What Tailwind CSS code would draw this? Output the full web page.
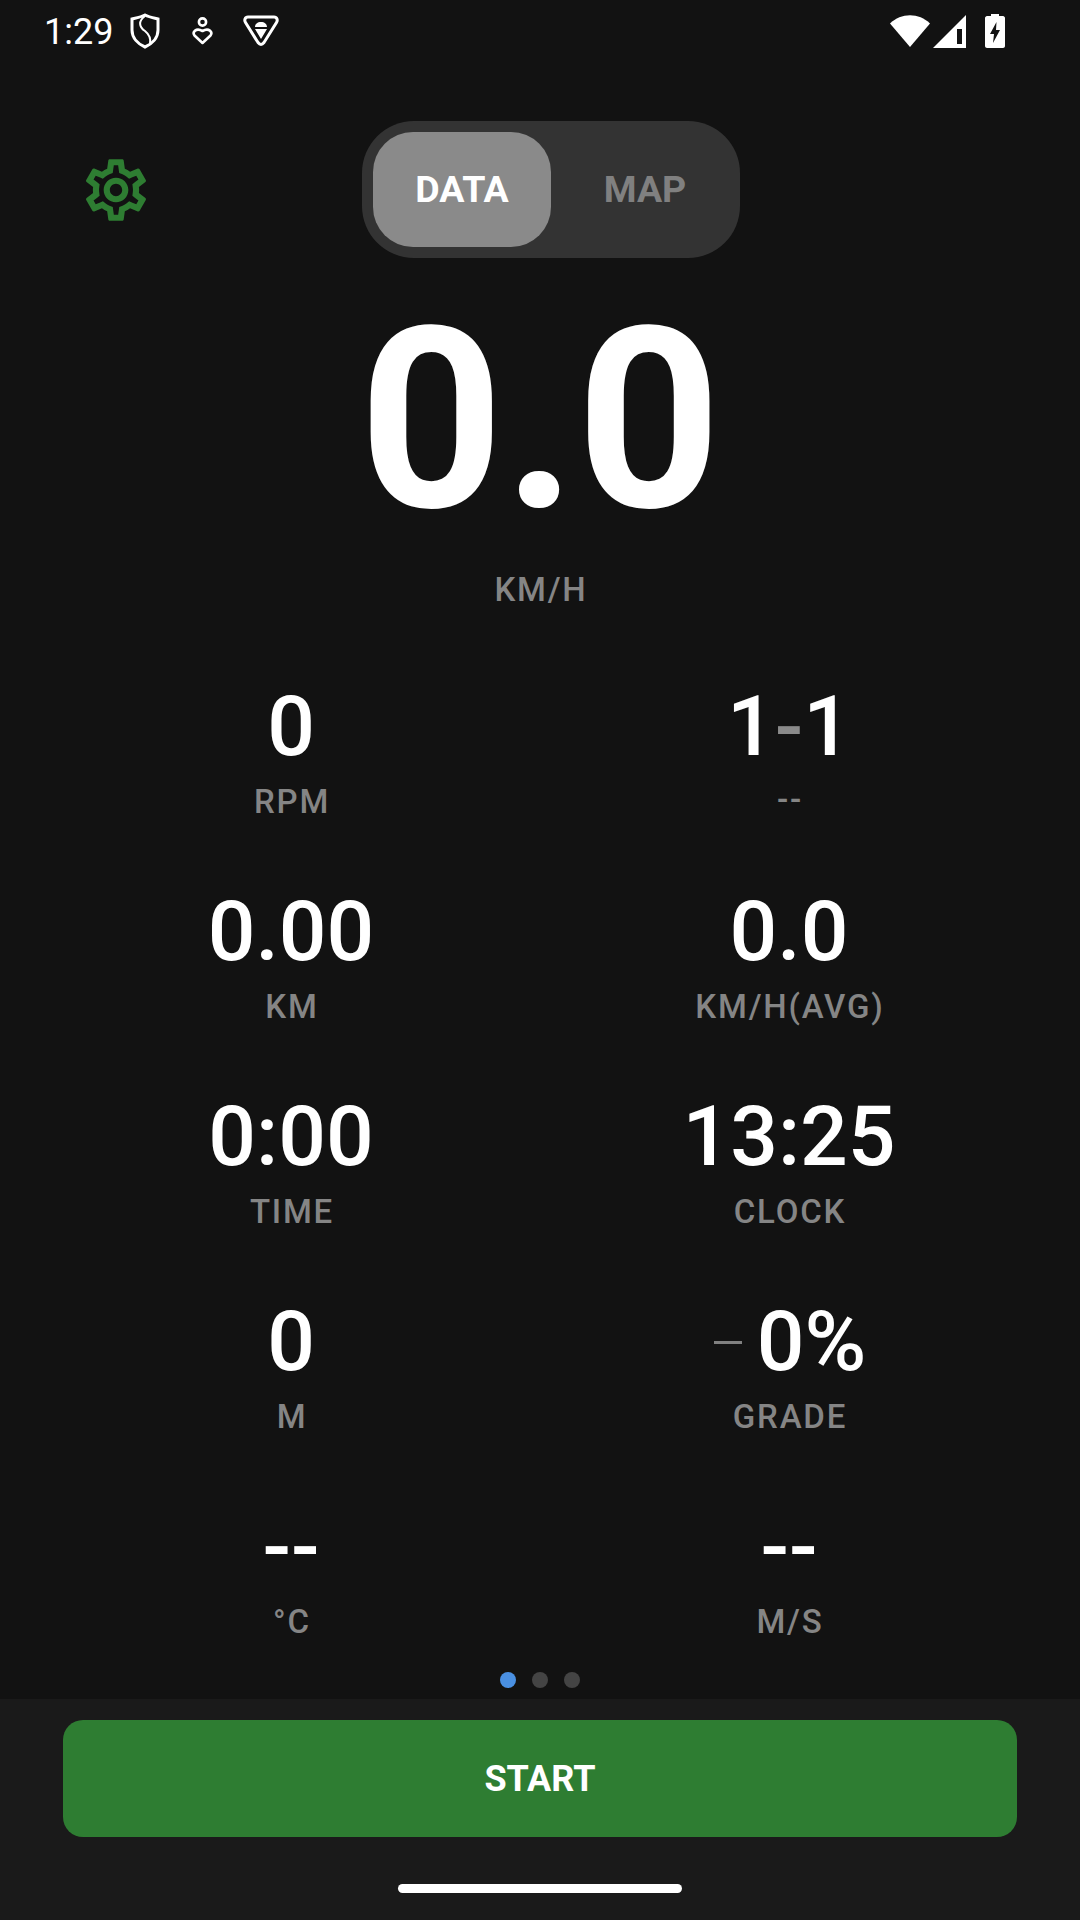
<!DOCTYPE html>
<html lang="en">
<head>
    <meta charset="UTF-8">
    <meta name="viewport" content="width=device-width, initial-scale=1.0">
    <title>Bike computer</title>
    <script src="https://cdn.jsdelivr.net/npm/@tailwindcss/browser@4"></script>
</head>
<body class="bg-[#121212]">
<div class="w-[1080px] h-[1920px] flex flex-col overflow-hidden bg-[#121212] text-white font-['Roboto',sans-serif]">

    <!-- status bar -->
    <div class="h-[60px] pt-[2px] flex items-center pl-[44px] pr-[75px] shrink-0">
        <span class="text-[36px] leading-[58px] pt-[1px]">1:29</span>
        <svg class="ml-[17px]" width="30" height="36" viewBox="0 0 30 36" fill="none" stroke="white" stroke-width="3"><path d="M15 2 C19 4 24 5 28 6 V17 C28 25 22 31 15 34 C8 31 2 25 2 17 V6 C6 5 11 4 15 2 Z"/><path d="M15 3 C8 8 9 14 15 18 C20 22 21 26 20 31" stroke-width="2"/></svg>
        <svg class="ml-[32px]" width="21" height="28" viewBox="0 0 21 28" fill="none" stroke="white" stroke-width="2.600"><circle cx="10.500" cy="5" r="3.600"/><path d="M10.500 26 L2.500 18.500 C0 15 4 10.500 10.500 14 C17 10.500 21 15 18.500 18.500 Z" stroke-linejoin="round"/></svg>
        <svg class="ml-[30px]" width="36" height="32" viewBox="0 0 36 32"><path d="M5 2 H31 C34 2 35 5 33.500 7.500 L21 27.500 C19 30 17 30 15 27.500 L2.500 7.500 C1 5 2 2 5 2 Z" fill="none" stroke="white" stroke-width="3"/><path d="M12 12 C12 9 14.500 7 18 7 C21.500 7 24 9 24 12 Z M12 14 H24 L18 24 Z" fill="white"/></svg>
        <svg class="ml-auto" width="40" height="32" viewBox="0 0 40 32"><path d="M0 8.500 C11 -2.500 29 -2.500 40 8.500 L20 32 Z" fill="white"/></svg>
        <svg class="ml-[3px]" width="33" height="33" viewBox="0 0 33 33"><path d="M33 0 V33 H0 Z M29 14 H24 V29 H29 Z" fill="white" fill-rule="evenodd"/></svg>
        <svg class="ml-[19px]" width="20" height="34" viewBox="0 0 20 34"><path d="M6 0 H14 V2 H18 C19 2 20 3 20 4 V32 C20 33 19 34 18 34 H2 C1 34 0 33 0 32 V4 C0 3 1 2 2 2 H6 Z M11.500 8 L5 20 H9 L8 29 L15 16 H11 Z" fill="white" fill-rule="evenodd"/></svg>
    </div>

    <!-- header -->
    <div class="relative h-[137px] mt-[61px] pl-[22px] shrink-0 flex justify-center">
        <svg class="absolute left-[79px] top-[32px]" width="74" height="74" viewBox="0 0 24 24" fill="#2e7d32"><path d="M19.43 12.98c.04-.32.07-.64.07-.98 0-.34-.03-.66-.07-.98l2.11-1.65c.19-.15.24-.42.12-.64l-2-3.46c-.09-.16-.26-.25-.44-.25-.06 0-.12.01-.17.03l-2.49 1c-.52-.4-1.08-.73-1.69-.98l-.38-2.65C14.46 2.18 14.25 2 14 2h-4c-.25 0-.46.18-.49.42l-.38 2.65c-.61.25-1.17.59-1.69.98l-2.49-1c-.06-.02-.12-.03-.18-.03-.17 0-.34.09-.43.25l-2 3.46c-.13.22-.07.49.12.64l2.11 1.65c-.04.32-.07.65-.07.98 0 .33.03.66.07.98l-2.11 1.65c-.19.15-.24.42-.12.64l2 3.46c.09.16.26.25.44.25.06 0 .12-.01.17-.03l2.49-1c.52.4 1.08.73 1.69.98l.38 2.65c.03.24.24.42.49.42h4c.25 0 .46-.18.49-.42l.38-2.65c.61-.25 1.17-.59 1.69-.98l2.49 1c.06.02.12.03.18.03.17 0 .34-.09.43-.25l2-3.46c.12-.22.07-.49-.12-.64l-2.11-1.65zm-1.98-1.71c.04.31.05.52.05.73 0 .21-.02.43-.05.73l-.14 1.13.89.7 1.08.84-.7 1.21-1.27-.51-1.04-.42-.9.68c-.43.32-.84.56-1.25.73l-1.06.43-.16 1.13-.2 1.35h-1.4l-.19-1.35-.16-1.13-1.06-.43c-.43-.18-.83-.41-1.23-.71l-.91-.7-1.06.43-1.27.51-.7-1.21 1.08-.84.89-.7-.14-1.13c-.03-.31-.05-.54-.05-.74s.02-.43.05-.73l.14-1.13-.89-.7-1.08-.84.7-1.21 1.27.51 1.04.42.9-.68c.43-.32.84-.56 1.25-.73l1.06-.43.16-1.13.2-1.35h1.39l.19 1.35.16 1.13 1.06.43c.43.18.83.41 1.23.71l.91.7 1.06-.43 1.27-.51.7 1.21-1.07.85-.89.7.14 1.13zM12 8c-2.21 0-4 1.79-4 4s1.79 4 4 4 4-1.79 4-4-1.790-4-4-4zm0 6c-1.100 0-2-.9-2-2s.9-2 2-2 2 .9 2 2-.9 2-2 2z"/></svg>
        <div class="w-[378px] h-[137px] rounded-[52px] bg-[#333333] p-[11px] flex">
            <div class="w-[178px] h-[115px] rounded-[40px] bg-[#8a8a8a] flex items-center justify-center text-[37.500px] font-bold">DATA</div>
            <div class="flex-1 pl-[10px] flex items-center justify-center text-[37.500px] font-bold text-[#808080]">MAP</div>
        </div>
    </div>

    <!-- speed -->
    <div class="h-[305px] mt-[10px] flex items-center justify-center text-[252px] font-bold leading-none shrink-0">0.0</div>
    <div class="text-center pl-[2px] text-[33px] font-medium leading-[42px] tracking-[1.800px] text-[#858585] mt-[-4px] shrink-0">KM/H</div>

    <!-- metrics -->
    <div class="grid grid-cols-2 w-[1080px] mt-[65px] pl-[42px] pr-[42px] shrink-0">
        <div class="h-[205px] text-center"><div class="text-[84px] leading-[102px] font-medium">0</div><div class="pl-[2px] text-[33px] leading-[48px] font-medium tracking-[1.800px] text-[#858585]">RPM</div></div>
        <div class="h-[205px] text-center"><div class="text-[84px] leading-[102px] font-medium">1<span class="text-[#8a8a8a]">-</span>1</div><div class="pl-[2px] text-[33px] leading-[48px] font-medium tracking-[1.800px] text-[#858585] -translate-y-[2px]">--</div></div>
        <div class="h-[205px] text-center"><div class="text-[84px] leading-[102px] font-medium">0.00</div><div class="pl-[2px] text-[33px] leading-[48px] font-medium tracking-[1.800px] text-[#858585]">KM</div></div>
        <div class="h-[205px] text-center"><div class="text-[84px] leading-[102px] font-medium">0.0</div><div class="pl-[2px] text-[33px] leading-[48px] font-medium tracking-[1.800px] text-[#858585]">KM/H(AVG)</div></div>
        <div class="h-[205px] text-center"><div class="text-[84px] leading-[102px] font-medium">0:00</div><div class="pl-[2px] text-[33px] leading-[48px] font-medium tracking-[1.800px] text-[#858585]">TIME</div></div>
        <div class="h-[205px] text-center"><div class="text-[84px] leading-[102px] font-medium">13:25</div><div class="pl-[2px] text-[33px] leading-[48px] font-medium tracking-[1.800px] text-[#858585]">CLOCK</div></div>
        <div class="h-[205px] text-center"><div class="text-[84px] leading-[102px] font-medium">0</div><div class="pl-[2px] text-[33px] leading-[48px] font-medium tracking-[1.800px] text-[#858585]">M</div></div>
        <div class="h-[205px] text-center">
            <div class="pl-[2px] text-[84px] leading-[102px] font-medium flex justify-center items-center"><span class="w-[28px] h-[3px] bg-[#808080] mr-[15px]"></span><span>0%</span></div>
            <div class="pl-[2px] text-[33px] leading-[48px] font-medium tracking-[1.800px] text-[#858585]">GRADE</div>
        </div>
        <div class="h-[203px] text-center"><div class="text-[84px] leading-[102px] font-medium">--</div><div class="pl-[2px] text-[33px] leading-[48px] font-medium tracking-[1.800px] text-[#858585]">°C</div></div>
        <div class="h-[203px] text-center"><div class="text-[84px] leading-[102px] font-medium">--</div><div class="pl-[2px] text-[33px] leading-[48px] font-medium tracking-[1.800px] text-[#858585]">M/S</div></div>
    </div>

    <!-- bottom -->
    <div class="flex-1 relative bg-[#1a1a1a]">
        <div class="absolute left-0 right-0 -top-[27px] flex justify-center gap-[16px]">
            <span class="w-[16px] h-[16px] rounded-full bg-[#4a90e2]"></span>
            <span class="w-[16px] h-[16px] rounded-full bg-[#444444]"></span>
            <span class="w-[16px] h-[16px] rounded-full bg-[#444444]"></span>
        </div>
        <div class="mx-[63px] mt-[21px] h-[117px] rounded-[20px] bg-[#2e7d32] flex items-center justify-center text-[36px] font-bold">START</div>
        <div class="mx-auto mt-[47px] w-[284px] h-[9px] rounded-full bg-white"></div>
    </div>
</div>
</body>
</html>
